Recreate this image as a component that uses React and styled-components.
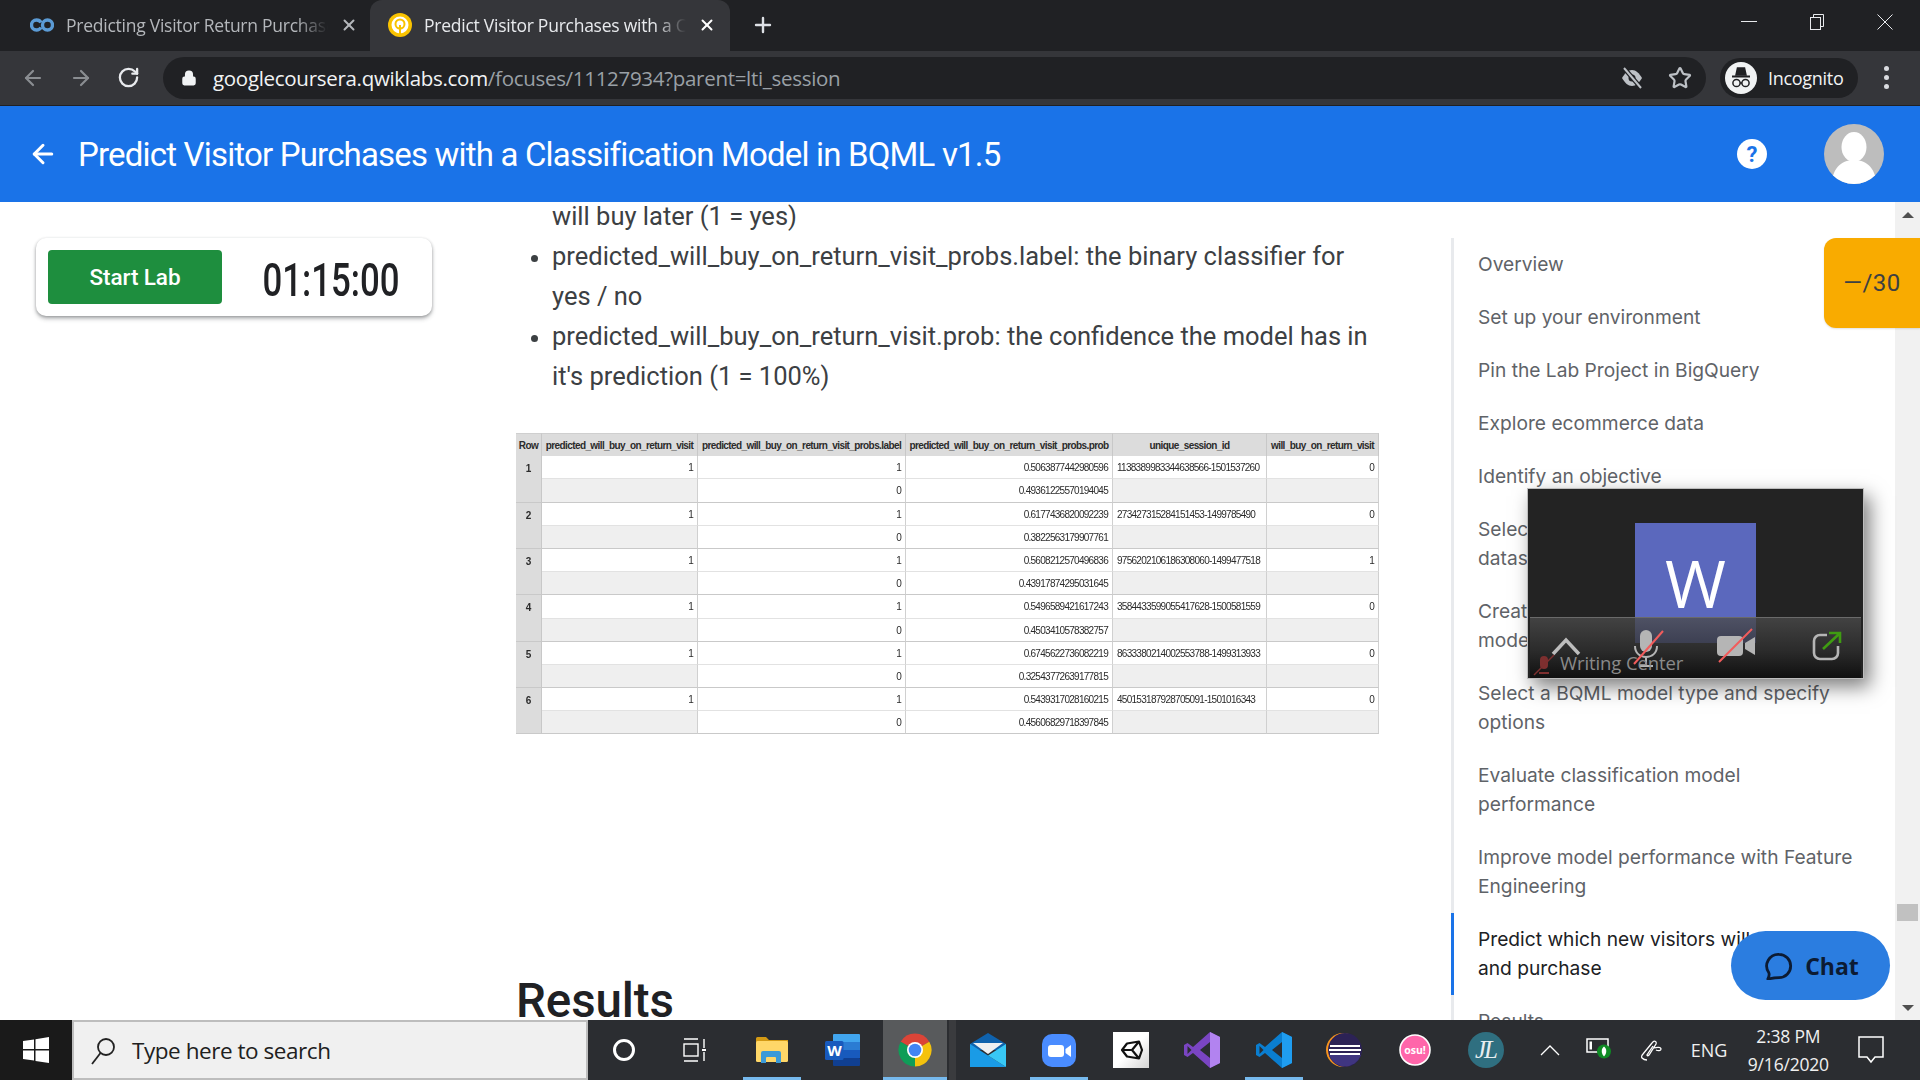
import React from "react";
import styled, { createGlobalStyle } from "styled-components";
import { ArrowLeft, ArrowRight, RotateCw, Lock, Star, X, Plus } from "lucide-react";

const Global = createGlobalStyle`
  html, body { margin: 0; padding: 0; width: 1920px; height: 1080px; overflow: hidden; background: #fff; }
  * { box-sizing: border-box; }
  body { font-family: "Roboto", "Liberation Sans", sans-serif; }
`;

const Page = styled.div`
  position: relative; width: 1920px; height: 1080px; display: flex; flex-direction: column; overflow: hidden;
`;
const TabStrip = styled.div`
  height: 51px; background: #202124; display: flex; align-items: stretch; flex: none;
`;
const Tab = styled.div`
  width: ${p => (p.$active ? 360 : 370)}px; display: flex; align-items: center; gap: 12px;
  padding: 0 ${p => (p.$active ? 14 : 12)}px 2px ${p => (p.$active ? 18 : 30)}px;
  background: ${p => (p.$active ? "#35363a" : "transparent")};
  border-radius: 12px 12px 0 0;
  color: ${p => (p.$active ? "#e8eaed" : "#b4b7bb")};
`;
const TabTitle = styled.span`
  flex: 1; white-space: nowrap; overflow: hidden; font: 400 17.5px "Open Sans", sans-serif; letter-spacing: -0.25px;
  -webkit-mask-image: linear-gradient(90deg, #000 88%, transparent 100%);
  mask-image: linear-gradient(90deg, #000 88%, transparent 100%);
`;
const NewTab = styled.div`
  margin-left: 21px; padding-bottom: 2px; display: flex; align-items: center; color: #dee1e6;
`;
const Grow = styled.div`flex: 1;`;
const WindowControls = styled.div`
  display: flex; align-items: flex-start; padding: 13px 27px 0 0; gap: 52px; color: #dadce0;
`;
const Toolbar = styled.div`
  height: 55px; background: #35363a; display: flex; align-items: center; flex: none; padding-bottom: 1px;
  border-bottom: 1px solid #202124;
`;
const NavButtons = styled.div`
  width: 163px; padding-left: 21px; display: flex; gap: 24px; align-items: center;
`;
const Omnibox = styled.div`
  width: 1543px; height: 42px; border-radius: 21px; background: #202124; display: flex; align-items: center;
  padding: 0 14px 0 18px; margin-top: 1px;
`;
const Url = styled.div`
  flex: 1; margin-left: 16px; font: 400 20.5px "Open Sans", sans-serif; letter-spacing: -0.3px; color: #9aa0a6; white-space: nowrap;
  & b { font-weight: 400; color: #f1f3f4; }
`;
const OmniIcons = styled.div`display: flex; gap: 24px; color: #bdc1c6; align-items: center;`;
const Profile = styled.div`
  margin-left: 14px; width: 138px; height: 40px; border-radius: 20px; background: #202124; display: flex; align-items: center;
  padding-left: 5px; gap: 11px; font: 400 18px "Open Sans", sans-serif; letter-spacing: -0.3px; color: #f1f3f4;
`;
const ProfileAvatar = styled.div`
  width: 32px; height: 32px; border-radius: 50%; background: #f1f3f4; display: flex; align-items: center; justify-content: center;
`;
const Dots = styled.div`
  margin-left: 26px; display: flex; flex-direction: column; gap: 4px;
  & i { display: block; width: 5px; height: 5px; border-radius: 50%; background: #dadce0; }
`;
const Banner = styled.header`
  height: 96px; background: #1a73e8; display: flex; align-items: center; color: #fff; flex: none; padding-left: 28px;
`;
const BannerTitle = styled.h1`
  margin: 0 0 0 20px; font: 400 33px "Roboto", sans-serif; letter-spacing: -0.82px; white-space: nowrap; flex: 1;
`;
const HelpDot = styled.div`
  width: 30px; height: 30px; border-radius: 50%; background: #fff; color: #1a73e8; display: flex; align-items: center; justify-content: center;
  font: 700 22px "Roboto", sans-serif; margin-right: 57px;
`;
const BannerAvatar = styled.div`
  width: 60px; height: 60px; border-radius: 50%; background: #bdbdbd; overflow: hidden; margin-right: 36px;
`;
const Body = styled.div`
  flex: 1; min-height: 0; display: flex; overflow: hidden; background: #fff;
`;
const LeftCol = styled.aside`
  width: 516px; flex: none; padding: 36px 0 0 36px;
`;
const LabCard = styled.div`
  width: 396px; height: 78px; border-radius: 10px; background: #fff; padding: 12px; display: flex; align-items: center;
  box-shadow: 0 1px 3px rgba(60,64,67,.35), 0 3px 4px rgba(60,64,67,.3);
`;
const StartButton = styled.div`
  flex: none; width: 174px; height: 54px; background: #1e8e3e; border-radius: 4px; color: #fff; display: flex; align-items: center; justify-content: center;
  font: 500 22.5px "Roboto", sans-serif; letter-spacing: -0.1px;
`;
const Timer = styled.div`
  flex: none; width: 186px; text-align: center; font: 500 47px "Roboto", sans-serif; color: #202124; transform: scaleX(.74);
  margin-left: 16px; padding-top: 4px; white-space: nowrap;
`;
const Article = styled.main`
  width: 935px; flex: none; margin-top: -6px;
`;
const Copy = styled.div`
  margin-left: 36px; width: 830px; font: 400 25.5px/40px "Roboto", sans-serif; color: #3c4043;
`;
const Bullets = styled.ul`
  margin: 0; padding: 0 0 0 36px; width: 866px;
  font: 400 25.5px/40px "Roboto", sans-serif; color: #3c4043;
  & li { padding: 0; }
  & li::marker { font-size: 24px; }
`;
const ResultGrid = styled.div`
  margin-top: 37px; display: grid; width: 863px;
  grid-template-columns: 26px 156px 208px 207px 154px 112px;
  grid-auto-rows: 23.2px; filter: blur(.45px); color: #2b2b2b;
  font: 400 10px "Liberation Sans", sans-serif;
`;
const HeadCell = styled.div`
  background: #dcdcdc; font-weight: 700; display: flex; align-items: center; justify-content: center; white-space: nowrap;
  border-right: 1px solid #c8c8c8; letter-spacing: -.6px; border-top: 1px solid #cfcfcf; overflow: hidden;
`;
const RowCell = styled.div`
  grid-row: span 2; background: #dcdcdc; text-align: center; padding-top: 7px; font-weight: 700;
  border-right: 1px solid #c8c8c8; border-bottom: 1px solid #c9c9c9;
`;
const DataCell = styled.div`
  background: ${p => (p.$empty ? "#efefef" : "#fff")}; display: flex; align-items: center; justify-content: ${p => (p.$left ? "flex-start" : "flex-end")};
  padding: 1px 4px 0; white-space: nowrap; letter-spacing: -.72px; font-weight: 400;
  border-right: 1px solid #d0d0d0; border-bottom: 1px solid ${p => (p.$last ? "#c9c9c9" : "#e2e2e2")};
`;
const Results = styled.h2`
  margin: 238px 0 0 0; font: 500 47.5px/58px "Roboto", sans-serif; color: #202124; letter-spacing: -.1px;
`;
const Outline = styled.nav`
  width: 444px; flex: none; margin-top: 36px; border-left: 3px solid #e8eaed;
`;
const OutlineItem = styled.div`
  padding: 12px 24px; margin-left: -3px; border-left: 3px solid ${p => (p.$active ? "#1a73e8" : "transparent")};
  font: 400 19.2px/29px "Inter", sans-serif; color: ${p => (p.$active ? "#202124" : "#5f6368")};
  white-space: pre-line;
`;
const Scrollbar = styled.div`
  width: 25px; flex: none; background: #f1f1f1; display: flex; flex-direction: column; align-items: center;
`;
const Arrow = styled.div`
  width: 0; height: 0; border-left: 6px solid transparent; border-right: 6px solid transparent;
  ${p => (p.$down ? "border-top: 6px solid #505050;" : "border-bottom: 6px solid #505050;")}
  margin: ${p => (p.$down ? "0 0 9px" : "10px 0 0")};
`;
const Thumb = styled.div`
  width: 21px; height: 17px; background: #c1c1c1; margin-top: 686px; margin-bottom: auto;
`;
const ScoreBadge = styled.div`
  position: absolute; left: 1824px; top: 238px; width: 96px; height: 90px; background: #f9ab00; border-radius: 12px 0 0 12px;
  display: flex; align-items: center; justify-content: center; font: 400 24px "Roboto", sans-serif; color: #3c4043; letter-spacing: .5px;
  box-shadow: 0 1px 2px rgba(0,0,0,.12);
`;
const ChatPill = styled.div`
  position: absolute; left: 1731px; top: 931px; width: 159px; height: 69px; border-radius: 35px; background: #2b7de0; padding-left: 3px;
  display: flex; align-items: center; justify-content: center; gap: 12px; font: 700 23px "Open Sans", sans-serif; color: #0c1b33;
`;
const MeetingWindow = styled.div`
  position: absolute; left: 1527px; top: 488px; width: 337px; height: 191px; background: #232323; border: 1px solid #bdbdbd;
  box-shadow: 6px 8px 18px rgba(0,0,0,.5); display: flex; justify-content: center; padding-top: 34px; overflow: hidden;
`;
const AvatarTile = styled.div`
  width: 121px; height: 120px; background: #5b68bd; color: #fff; display: flex; justify-content: center; padding-top: 26px;
  font: 400 66px/1 "Open Sans", sans-serif;
`;
const MeetingBar = styled.div`
  position: absolute; left: 2px; right: 2px; bottom: 0; height: 61px; border-top: 1px solid #6a6a6a;
  background: linear-gradient(180deg, rgba(75,75,75,.78) 0%, rgba(45,45,45,.78) 55%, rgba(15,15,15,.96) 100%);
`;
const MeetingIcon = styled.div`
  position: absolute; left: ${p => p.$x}px; top: ${p => p.$y}px; display: flex;
`;
const MeetingLabel = styled.div`
  position: absolute; left: 30px; top: 32px; font: 400 18.5px "Open Sans", sans-serif; color: #8a8a8a; white-space: nowrap; letter-spacing: -.1px;
`;
const Taskbar = styled.footer`
  height: 60px; flex: none; background: #2b2d31; display: flex; align-items: stretch; color: #fff;
`;
const StartTile = styled.div`
  width: 72px; background: #1a1a1a; display: flex; align-items: center; justify-content: center;
`;
const SearchBox = styled.div`
  width: 516px; background: #f0f0f0; border: 2px solid #bdbdbd; display: flex; align-items: center; gap: 16px; padding: 1px 0 0 16px;
  font: 400 22.5px "Open Sans", sans-serif; letter-spacing: -.45px; color: #202020;
`;
const Slots = styled.div`
  display: flex; padding-left: 4px; gap: 7.4px;
`;
const Slot = styled.div`
  width: 64px; margin-left: ${p => p.$shift || 0}px; height: 60px; display: flex; align-items: center; justify-content: center; position: relative;
  background: ${p => (p.$current ? "#585a5c" : "transparent")};
  &::after {
    content: ""; display: ${p => (p.$open ? "block" : "none")}; position: absolute; left: ${p => (p.$current ? 0 : 3)}px; right: ${p => (p.$current ? 0 : 3)}px; bottom: 0; height: 3px; background: #76b9ed;
  }
  &::before {
    content: ""; display: ${p => (p.$current ? "block" : "none")}; position: absolute; left: 100%; top: 0; bottom: 0; width: 7px; background: #3a3b3e; border-left: 2px solid #2b2d31;
  }
`;
const Tray = styled.div`
  flex: 1; display: flex; align-items: center; font: 400 18px "Open Sans", sans-serif; color: #f0f0f0;
`;
const TrayIcon = styled.div`
  width: ${p => p.$w}px; display: flex; justify-content: center; align-items: center; flex: none;
`;
const Language = styled.span`margin-left: 5px;`;
const Clock = styled.div`
  width: 122px; flex: none; text-align: center; font: 400 17.5px/28px "Open Sans", sans-serif; letter-spacing: -.2px;
`;
const OsuText = styled.text`font: 700 10.5px "Open Sans", sans-serif;`;
const JuliaText = styled.text`font: italic 400 25px "Liberation Serif", serif;`;
const WordText = styled.text`font: 700 15px "Open Sans", sans-serif;`;

const records = [
  ["0.5063877442980596", "1138389983344638566-1501537260", "0", "0.49361225570194045"],
  ["0.6177436820092239", "273427315284151453-1499785490", "0", "0.3822563179907761"],
  ["0.5608212570496836", "9756202106186308060-1499477518", "1", "0.43917874295031645"],
  ["0.5496589421617243", "3584433599055417628-1500581559", "0", "0.4503410578382757"],
  ["0.6745622736082219", "8633380214002553788-1499313933", "0", "0.32543772639177815"],
  ["0.5439317028160215", "450153187928705091-1501016343", "0", "0.45606829718397845"],
];
const headers = ["Row", "predicted_will_buy_on_return_visit", "predicted_will_buy_on_return_visit_probs.label", "predicted_will_buy_on_return_visit_probs.prob", "unique_session_id", "will_buy_on_return_visit"];
const outline = [
  ["Overview"], ["Set up your environment"], ["Pin the Lab Project in BigQuery"], ["Explore ecommerce data"], ["Identify an objective"],
  ["Select features and create your training\ndataset"], ["Create a BigQuery dataset to store\nmodels"],
  ["Select a BQML model type and specify\noptions"], ["Evaluate classification model\nperformance"],
  ["Improve model performance with Feature\nEngineering"], ["Predict which new visitors will come back\nand purchase", true], ["Results"],
];

const ribbon = "M26 0L9 15 3.500 11 0 13v10l3.500 2L9 21l17 15 10-5V5zM26 10v16l-10-8zM3.500 14v8l4-4z";
const Ribbon = ({ main, side }) => (
  <svg width="36" height="36" viewBox="0 0 36 36">
    <path d={ribbon} fill={main} fillRule="evenodd" />
    <path d="M26 0l10 5v26l-10 5V26V10z" fill={side} />
  </svg>
);
const icons = {
  cortana: <svg width="24" height="24" viewBox="0 0 24 24"><circle cx="12" cy="12" r="9.500" fill="none" stroke="#fff" strokeWidth="3" /></svg>,
  task: <svg width="26" height="26" viewBox="0 0 26 26" fill="none" stroke="#fff" strokeWidth="1.400"><path d="M2 2h14M2 24h14" /><rect x="2" y="7" width="14" height="12" /><path d="M22 2v9M22 15v9" /><path d="M20 13h4" strokeWidth="2" /></svg>,
  explorer: (
    <svg width="32" height="26" viewBox="0 0 32 26"><path d="M0 1.500Q0 0 1.500 0H10l3 3h19v6H0z" fill="#d49a14" /><rect x="0" y="4" width="32" height="21" rx="1.500" fill="#ffd768" /><path d="M5 26V16q0-2 2-2h16q2 0 2 2v10h-5v-5q0-1-1-1h-8q-1 0-1 1v5z" fill="#3b9ad8" /></svg>
  ),
  word: (
    <svg width="36" height="32" viewBox="0 0 36 32"><rect x="8" y="0" width="27" height="9" rx="1" fill="#41a5ee" /><rect x="8" y="8" width="27" height="8" fill="#2b7cd3" /><rect x="8" y="16" width="27" height="8" fill="#185abd" /><rect x="8" y="24" width="27" height="8" rx="1" fill="#103f91" /><rect x="0" y="7" width="18.500" height="19" rx="1.500" fill="#185abd" /><WordText x="9.500" y="22" textAnchor="middle" fill="#fff">W</WordText></svg>
  ),
  chrome: (
    <svg width="34" height="34" viewBox="0 0 34 34">
      <path d="M17 17L2.710 8.750A16.500 16.500 0 0 1 31.290 8.750z" fill="#db4437" />
      <path d="M17 17l14.290-8.250A16.500 16.500 0 0 1 17 33.500z" fill="#f4c20d" />
      <path d="M17 17v16.500A16.500 16.500 0 0 1 2.710 8.750z" fill="#0f9d58" />
      <circle cx="17" cy="17" r="8" fill="#fff" /><circle cx="17" cy="17" r="6.300" fill="#4285f4" />
    </svg>
  ),
  mail: (
    <svg width="36" height="34" viewBox="0 0 36 34"><path d="M18 0l18 11v6H0v-6z" fill="#0f62ad" /><path d="M3 10h30L18 21z" fill="#eef0f2" /><path d="M0 11l36 23H0z" fill="#1a9be6" /><path d="M36 11L18 22.500 36 34z" fill="#38c8f5" /></svg>
  ),
  zoom: (
    <svg width="34" height="33" viewBox="0 0 34 33"><rect width="34" height="33" rx="10" fill="#4a8cff" /><rect x="6" y="11" width="16" height="12" rx="3" fill="#fff" /><path d="M23.500 15l5.500-4v12l-5.500-4z" fill="#fff" /></svg>
  ),
  unity: (
    <svg width="36" height="36" viewBox="0 0 36 36"><defs><linearGradient id="unityBg" x1="0" y1="0" x2="1" y2="1"><stop offset=".5" stopColor="#ffffff" /><stop offset="1" stopColor="#d4d4d4" /></linearGradient></defs><rect width="36" height="36" fill="url(#unityBg)" /><path d="M9 18l5-6.500 12-2 3 8.500-3 8.500-12-2zM9 18h10l7-8.500M19 18l7 8.500" fill="none" stroke="#111" strokeWidth="2.200" strokeLinejoin="round" /></svg>
  ),
  vs: <Ribbon main="#7a45c2" side="#b283f0" />,
  vscode: <Ribbon main="#0a7ed0" side="#1f9df0" />,
  eclipse: (
    <svg width="36" height="34" viewBox="0 0 36 34"><circle cx="17" cy="17" r="17" fill="#f7941e" /><circle cx="19" cy="17" r="17" fill="#2c2255" /><path d="M3 22h32a17 17 0 0 1-32 0z" fill="#3f3580" /><g fill="#fff"><rect x="4" y="12" width="30" height="2" /><rect x="3" y="16" width="32" height="2" /><rect x="4" y="20" width="30" height="2" /></g></svg>
  ),
  osu: (
    <svg width="32" height="32" viewBox="0 0 32 32"><circle cx="16" cy="16" r="15" fill="#ff66aa" stroke="#fff" strokeWidth="1.600" /><OsuText x="16" y="19.500" textAnchor="middle" fill="#fff">osu!</OsuText></svg>
  ),
  julia: (
    <svg width="36" height="36" viewBox="0 0 36 36"><circle cx="18" cy="18" r="18" fill="#2f6f80" /><JuliaText x="7" y="26" fill="#e8eef0">J</JuliaText><JuliaText x="16" y="26" fill="#e8eef0">L</JuliaText></svg>
  ),
};
const pinned = [
  ["cortana"], ["task"], ["explorer", { $open: true, $shift: 5 }], ["word"], ["chrome", { $open: true, $current: true }],
  ["mail", { $shift: 2 }], ["zoom", { $open: true }], ["unity"], ["vs"], ["vscode", { $open: true }], ["eclipse", { $shift: -1 }], ["osu"], ["julia", { $shift: -1 }],
];

export default function App() {
  return (
    <Page>
      <Global />
      <TabStrip>
        <Tab>
          <svg width="24" height="14" viewBox="0 0 24 14" fill="none" stroke="#5b9bd5" strokeWidth="3.400"><path d="M11 4.500C10 2.500 8.500 2 6.500 2a5 5 0 0 0 0 10c2 0 3.500-.8 4.500-2.500" /><circle cx="17.500" cy="7" r="5" /></svg>
          <TabTitle>Predicting Visitor Return Purchases with a Classification</TabTitle>
          <X size={18} strokeWidth={2.600} />
        </Tab>
        <Tab $active>
          <svg width="24" height="24" viewBox="0 0 24 24"><circle cx="12" cy="12" r="12" fill="#f9c301" /><circle cx="12" cy="12" r="8.500" fill="#fff" /><circle cx="12" cy="11" r="4.500" fill="none" stroke="#f9c301" strokeWidth="2" /><path d="M12 12v9" stroke="#f9c301" strokeWidth="2" /></svg>
          <TabTitle>Predict Visitor Purchases with a Classification</TabTitle>
          <X size={18} strokeWidth={2.600} color="#fff" />
        </Tab>
        <NewTab><Plus size={24} strokeWidth={2.400} /></NewTab>
        <Grow />
        <WindowControls>
          <svg width="16" height="18" viewBox="0 0 16 18"><path d="M0 8.500h16" stroke="#e8eaed" /></svg>
          <svg width="16" height="18" viewBox="0 0 16 18" fill="none" stroke="#e8eaed"><rect x="1.500" y="4.500" width="10" height="12" fill="#202124" /><path d="M4.500 4.500V1.500h10V13.500h-3" /></svg>
          <svg width="16" height="18" viewBox="0 0 16 18" stroke="#e8eaed"><path d="M.5 1.500l15 15M15.500 1.500l-15 15" /></svg>
        </WindowControls>
      </TabStrip>
      <Toolbar>
        <NavButtons>
          <ArrowLeft size={24} color="#8a8d91" strokeWidth={2.200} />
          <ArrowRight size={24} color="#8a8d91" strokeWidth={2.200} />
          <RotateCw size={23} color="#e8eaed" strokeWidth={2.400} />
        </NavButtons>
        <Omnibox>
          <Lock size={16} color="#f1f3f4" fill="#f1f3f4" strokeWidth={2.200} />
          <Url><b>googlecoursera.qwiklabs.com</b>/focuses/11127934?parent=lti_session</Url>
          <OmniIcons>
            <svg width="24" height="24" viewBox="0 0 24 24"><path d="M2 12c3-5 6-8 10-8s7 3 10 8c-3 5-6 8-10 8s-7-3-10-8z" fill="#bdc1c6" /><circle cx="12" cy="12" r="3.500" fill="#202124" /><path d="M4 2l17 20" stroke="#202124" strokeWidth="4.500" /><path d="M4 2l17 20" stroke="#bdc1c6" strokeWidth="2" /></svg>
            <Star size={24} strokeWidth={2.200} />
          </OmniIcons>
        </Omnibox>
        <Profile>
          <ProfileAvatar>
            <svg width="24" height="24" viewBox="0 0 24 24" fill="none" stroke="#202124" strokeWidth="1.500"><path d="M7 9l1.500-7h7L17 9z" fill="#202124" /><path d="M3 10.500h18" strokeWidth="2" /><circle cx="7.500" cy="17" r="3.600" /><circle cx="16.500" cy="17" r="3.600" /><path d="M11 17h2" /></svg>
          </ProfileAvatar>
          Incognito
        </Profile>
        <Dots><i /><i /><i /></Dots>
      </Toolbar>
      <Banner>
        <ArrowLeft size={30} strokeWidth={2.400} />
        <BannerTitle>Predict Visitor Purchases with a Classification Model in BQML v1.5</BannerTitle>
        <HelpDot>?</HelpDot>
        <BannerAvatar>
          <svg width="60" height="60" viewBox="0 0 60 60"><ellipse cx="30" cy="23" rx="12.500" ry="15" fill="#fff" /><path d="M8 60c0-14 8-24 22-24s22 10 22 24z" fill="#fff" /></svg>
        </BannerAvatar>
      </Banner>
      <Body>
        <LeftCol>
          <LabCard>
            <StartButton>Start Lab</StartButton>
            <Timer>01:15:00</Timer>
          </LabCard>
        </LeftCol>
        <Article>
          <Copy>will buy later (1 = yes)</Copy>
          <Bullets>
            <li>predicted_will_buy_on_return_visit_probs.label: the binary classifier for yes / no</li>
            <li>predicted_will_buy_on_return_visit.prob: the confidence the model has in it's prediction (1 = 100%)</li>
          </Bullets>
          <ResultGrid>
            {headers.map(h => <HeadCell key={h}>{h}</HeadCell>)}
            {records.map((r, i) => (
              <React.Fragment key={r[1]}>
                <RowCell>{i + 1}</RowCell>
                <DataCell>1</DataCell>
                <DataCell>1</DataCell>
                <DataCell>{r[0]}</DataCell>
                <DataCell $left>{r[1]}</DataCell>
                <DataCell>{r[2]}</DataCell>
                <DataCell $empty $last />
                <DataCell $last>0</DataCell>
                <DataCell $last>{r[3]}</DataCell>
                <DataCell $empty $last />
                <DataCell $empty $last />
              </React.Fragment>
            ))}
          </ResultGrid>
          <Results>Results</Results>
        </Article>
        <Outline>
          {outline.map(([t, a]) => <OutlineItem key={t} $active={a}>{t}</OutlineItem>)}
        </Outline>
        <Scrollbar>
          <Arrow />
          <Thumb />
          <Arrow $down />
        </Scrollbar>
      </Body>
      <Taskbar>
        <StartTile>
          <svg width="26" height="26" viewBox="0 0 26 26" fill="#fff"><path d="M0 4l11-1.500V12H0zM12.500 2.300L26 0v12H12.500zM0 13.500h11v10L0 22zM12.500 13.500H26V26l-13.500-2z" /></svg>
        </StartTile>
        <SearchBox>
          <svg width="26" height="28" viewBox="0 0 26 28" fill="none" stroke="#222" strokeWidth="1.800"><circle cx="16" cy="10" r="8" /><path d="M10.500 16L2 27" /></svg>
          Type here to search
        </SearchBox>
        <Slots>
          {pinned.map(([k, props]) => <Slot key={k} {...props}>{icons[k]}</Slot>)}
        </Slots>
        <Tray>
          <TrayIcon $w={64}>
            <svg width="20" height="12" viewBox="0 0 20 12" fill="none" stroke="#fff" strokeWidth="1.300"><path d="M1 11l9-9 9 9" /></svg>
          </TrayIcon>
          <TrayIcon $w={35}>
            <svg width="26" height="24" viewBox="0 0 26 24"><rect x="1" y="1" width="21" height="13" fill="#2b2d31" stroke="#fff" strokeWidth="1.500" /><rect x="3.500" y="3.500" width="2.500" height="8" fill="#fff" /><circle cx="18" cy="13.500" r="7" fill="#0f8a24" /><path d="M18 8.500c3 2 3 7 0 10-3-3-3-8 0-10z" fill="#fff" /></svg>
          </TrayIcon>
          <TrayIcon $w={69}>
            <svg width="22" height="22" viewBox="0 0 22 22" fill="none" stroke="#fff" strokeWidth="1.300"><path d="M7 21c-2 0-4-1-5-2s0-3 1-4l9-11c2-3 5-2 4 1l-7 11c-1 1-2 1-2 0l6-9M14 9c3-1 7-1 7 1s-3 2-5 1" /></svg>
          </TrayIcon>
          <Language>ENG</Language>
          <Clock>2:38 PM<br />9/16/2020</Clock>
          <TrayIcon $w={44}>
            <svg width="26" height="28" viewBox="0 0 26 28" fill="none" stroke="#fff" strokeWidth="1.500"><path d="M1 1h24v20h-8l-4 5-4-5H1z" /></svg>
          </TrayIcon>
        </Tray>
      </Taskbar>
      <ScoreBadge>—/30</ScoreBadge>
      <ChatPill>
        <svg width="28" height="28" viewBox="0 0 30 30" fill="none" stroke="#0c1b33" strokeWidth="3" strokeLinejoin="round"><path d="M15 2.500a12.500 12.500 0 0 1 0 25c-3 0-7 .5-12 1.500 1.500-3 2-5 1-7A12.500 12.500 0 0 1 15 2.500z" /></svg>
        Chat
      </ChatPill>
      <MeetingWindow>
        <AvatarTile>W</AvatarTile>
        <MeetingBar>
          <MeetingIcon $x={20} $y={18}>
            <svg width="32" height="20" viewBox="0 0 32 20" fill="none" stroke="#bdbdbd" strokeWidth="3.500"><path d="M3 18L16 4l13 14" /></svg>
          </MeetingIcon>
          <MeetingIcon $x={100} $y={11}>
            <svg width="34" height="40" viewBox="0 0 34 40" fill="none"><rect x="10" y="1" width="12" height="22" rx="6" fill="#b5b5b5" /><path d="M5 17c0 7 5 11 11 11s11-4 11-11M16 28v8M9 37h14" stroke="#b5b5b5" strokeWidth="2" /><path d="M4 35L33 2" stroke="#f25c5c" strokeWidth="2" /></svg>
          </MeetingIcon>
          <MeetingIcon $x={187} $y={10}>
            <svg width="38" height="36" viewBox="0 0 38 36"><rect x="0" y="8" width="26" height="20" rx="4" fill="#b5b5b5" /><path d="M28 15l10-6v18l-10-6z" fill="#b5b5b5" /><path d="M2 34L35 1" stroke="#f25c5c" strokeWidth="2" /></svg>
          </MeetingIcon>
          <MeetingIcon $x={282} $y={13}>
            <svg width="30" height="30" viewBox="0 0 30 30" fill="none" strokeWidth="2.600"><path d="M15 4H8a6 6 0 0 0-6 6v12a6 6 0 0 0 6 6h12a6 6 0 0 0 6-6v-7" stroke="#b5b5b5" /><path d="M11 18L27 3M17 2h11v10" stroke="#3f9c12" /></svg>
          </MeetingIcon>
          <MeetingIcon $x={3} $y={36}>
            <svg width="22" height="22" viewBox="0 0 22 22" fill="none"><rect x="7" y="2" width="8" height="13" rx="4" fill="#7d2f2f" /><path d="M6 19h10" stroke="#7d2f2f" strokeWidth="2" /><path d="M1 21L21 1" stroke="#7d2f2f" strokeWidth="1.500" /></svg>
          </MeetingIcon>
          <MeetingLabel>Writing Center</MeetingLabel>
        </MeetingBar>
      </MeetingWindow>
    </Page>
  );
}
